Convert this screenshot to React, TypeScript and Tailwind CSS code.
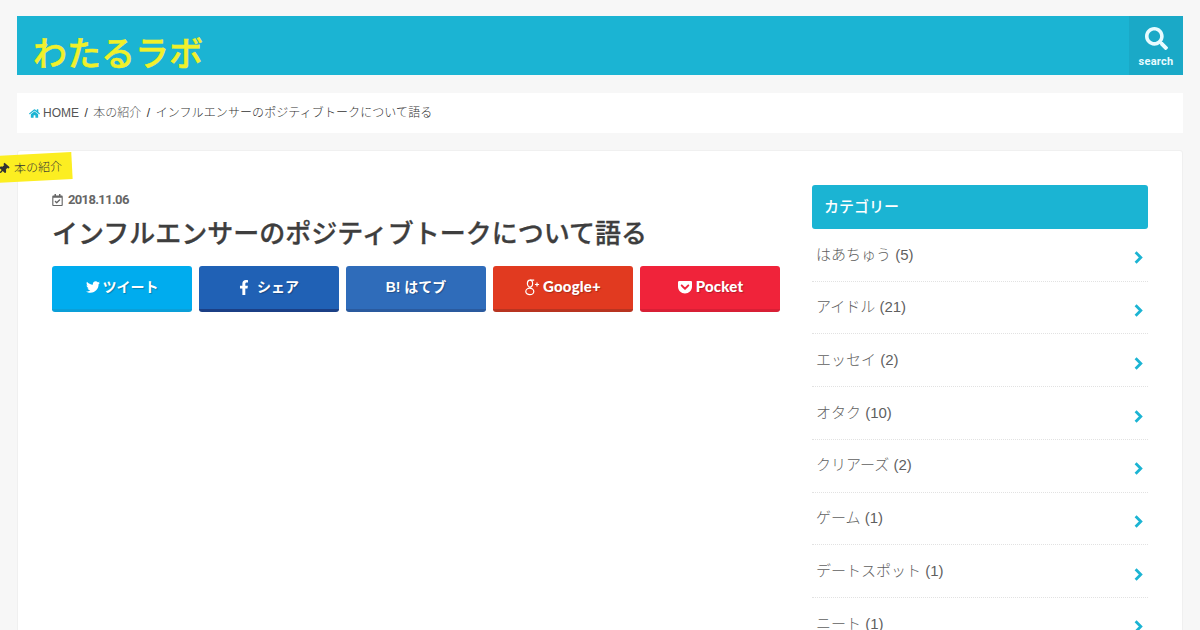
import { FaFacebookF, FaGetPocket, FaHome, FaRegCalendarCheck, FaSearch, FaThumbtack, FaTwitter } from "react-icons/fa";

const categories = [
  "はあちゅう (5)",
  "アイドル (21)",
  "エッセイ (2)",
  "オタク (10)",
  "クリアーズ (2)",
  "ゲーム (1)",
  "デートスポット (1)",
  "ニート (1)",
];

function Chevron() {
  return (
    <svg viewBox="0 0 9 13" className="mt-[6px] mr-[1px] h-[13px] w-[9px] text-[#1bb4d3]" fill="none" stroke="currentColor" strokeWidth="2.8">
      <path d="M1.6 1.2 L6.8 6.5 L1.6 11.8" />
    </svg>
  );
}

function GooglePlusIcon() {
  return (
    <svg viewBox="0 0 15 17" className="h-[17px] w-[15px]" fill="none" stroke="currentColor" strokeWidth="1.2">
      <ellipse cx="5" cy="4.6" rx="2.6" ry="3.4" />
      <ellipse cx="4.8" cy="12.4" rx="4" ry="3.2" />
      <path d="M5.4 8 C3.8 9 7 9.4 6.6 9.6 M5 1.2 H9.2 M12 3.4 V7.6 M9.9 5.5 H14.1" />
    </svg>
  );
}

function ShareButton({ className, children }: { className: string; children: React.ReactNode }) {
  return (
    <a className={`flex h-[46px] w-[140px] items-center justify-center gap-[3px] rounded-[3px] border-b-[3px] pb-[1px] text-sm font-bold text-white [text-shadow:1px_1px_1px_rgba(0,0,0,0.25)] ${className}`}>
      {children}
    </a>
  );
}

export default function App() {
  return (
    <div className="h-[630px] overflow-hidden bg-[#f7f7f7] px-[17px] pt-4 font-['Liberation_Sans','Noto_Sans_CJK_JP',sans-serif] text-[#3e3e3e]">
      {/* Header */}
      <header className="flex h-[59px] items-stretch justify-between bg-[#1bb4d3]">
        <p className="pl-4 pt-[13px] text-[34px] leading-[50px] font-medium text-[#f0f02a] [-webkit-text-stroke:0.5px_#f0f02a]">わたるラボ</p>
        <div className="flex w-[54px] flex-col items-center bg-[#1aa9c7] pt-[11px] text-[#e8fbff]">
          <FaSearch className="h-[23px] w-[23px]" />
          <span className="mt-[5px] font-['Roboto',sans-serif] text-[11px] leading-[14px] font-bold tracking-[0.3px]">search</span>
        </div>
      </header>

      {/* Breadcrumb */}
      <nav className="mt-[18px] flex h-10 items-center bg-white pl-3 text-xs font-light text-[#555]">
        <FaHome className="mr-[3px] h-[11px] w-[11px] text-[#1bb4d3]" />
        <span>HOME</span>
        <span className="mx-[5.5px] text-[#333]">/</span>
        <span>本の紹介</span>
        <span className="mx-[5.5px] text-[#333]">/</span>
        <span className="tracking-[0.09px] text-[#333]">インフルエンサーのポジティブトークについて語る</span>
      </nav>

      {/* Main card */}
      <main className="relative mt-[17px] flex h-[600px] gap-8 rounded-t-[3px] border border-[#f0f0f0] bg-white px-[34px] pt-[34px]">
        <div className="absolute top-[3px] -left-[26px] flex h-[27px] w-[80px] -rotate-3 items-center bg-[#fcee21] pl-[6px] text-xs font-light text-[#333]">
          <FaThumbtack className="mr-[5px] h-[11px] w-[11px] rotate-45 text-[#333]" />
          本の紹介
        </div>

        <article className="w-[728px]">
          <div className="mt-[7px] flex items-center gap-[5px] text-[#666]">
            <FaRegCalendarCheck className="h-[12px] w-[11px]" />
            <span className="font-['Roboto',sans-serif] text-[13px] leading-4 font-bold tracking-[-0.65px]">2018.11.06</span>
          </div>
          <h1 className="mt-[6px] text-[26px] leading-[40px] font-medium text-[#3e3e3e] [-webkit-text-stroke:0.3px_#3e3e3e]">インフルエンサーのポジティブトークについて語る</h1>
          <div className="mt-[12px] flex gap-[7px]">
            <ShareButton className="border-[#0a9fd8] bg-[#00acee]">
              <FaTwitter className="h-[14px] w-[14px]" /> ツイート
            </ShareButton>
            <ShareButton className="border-[#1b3f85] bg-[#2061b5]">
              <FaFacebookF className="mr-[5px] h-[15px] w-[10px]" /> シェア
            </ShareButton>
            <ShareButton className="border-[#2a5a9e] bg-[#2f6cba]">
              B! はてブ
            </ShareButton>
            <ShareButton className="border-[#b83420] bg-[#e13a20]">
              <GooglePlusIcon /> <span className="font-['Lato',sans-serif] text-[15px] font-black tracking-[0.2px]">Google+</span>
            </ShareButton>
            <ShareButton className="border-[#d81f35] bg-[#f0233a]">
              <FaGetPocket className="h-[16px] w-[16px]" /> <span className="font-['Lato',sans-serif] text-[15px] font-black tracking-[0.2px]">Pocket</span>
            </ShareButton>
          </div>
        </article>

        {/* Sidebar */}
        <aside className="w-[336px]">
          <h2 className="flex h-11 items-center rounded-[3px] bg-[#1bb4d3] pl-3 text-[15px] font-medium text-white">カテゴリー</h2>
          <ul className="pt-[0.1px]">
            {categories.map((name) => (
              <li key={name} className="flex h-[52.7px] items-center justify-between border-b border-dotted border-[#e2e2e2] px-[4px] text-[15px] font-light text-[#5f5f5f]">
                <span>{name}</span>
                <Chevron />
              </li>
            ))}
          </ul>
        </aside>
      </main>
    </div>
  );
}
